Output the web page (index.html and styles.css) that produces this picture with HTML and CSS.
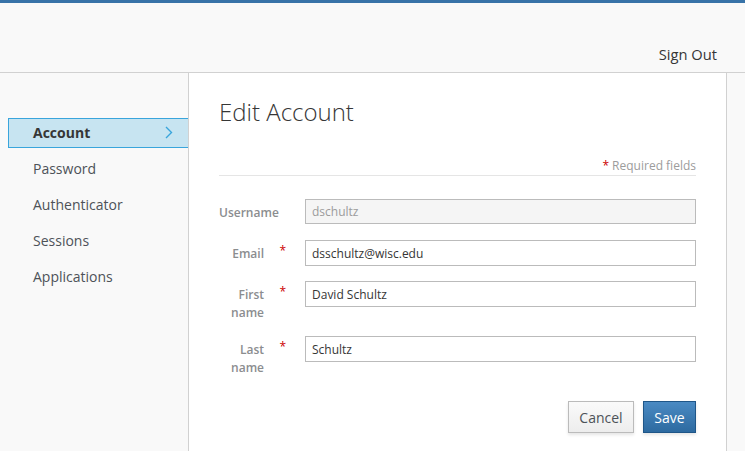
FILE: index.html
```html
<!DOCTYPE html>
<html lang="en">
<head>
<meta charset="utf-8">
<title>Edit Account</title>
<link rel="stylesheet" href="styles.css">
</head>
<body>
<header class="topbar">
  <a class="signout" href="#">Sign Out</a>
</header>
<div class="main">
  <nav class="sidebar">
    <ul class="nav">
      <li class="nav-item active"><a href="#">Account<svg class="chev" width="8" height="13" viewBox="0 0 8 13"><path d="M1 1 L6.5 6.5 L1 12" fill="none" stroke="#39a5dc" stroke-width="1.4"/></svg></a></li>
      <li class="nav-item"><a href="#">Password</a></li>
      <li class="nav-item"><a href="#">Authenticator</a></li>
      <li class="nav-item"><a href="#">Sessions</a></li>
      <li class="nav-item"><a href="#">Applications</a></li>
    </ul>
  </nav>
  <section class="content">
    <h1 class="title">Edit Account</h1>
    <div class="subtitle"><span class="req">*</span> Required fields</div>
    <form class="form">
      <div class="row row-user">
        <div class="label-cell no-req"><label class="lbl nowrap">Username</label></div>
        <input class="field disabled" type="text" value="dschultz" disabled>
      </div>
      <div class="row">
        <div class="label-cell"><label class="lbl">Email</label><span class="req-mark">*</span></div>
        <input class="field" type="text" value="dsschultz@wisc.edu">
      </div>
      <div class="row">
        <div class="label-cell"><label class="lbl">First name</label><span class="req-mark">*</span></div>
        <input class="field" type="text" value="David Schultz">
      </div>
      <div class="row">
        <div class="label-cell"><label class="lbl">Last name</label><span class="req-mark">*</span></div>
        <input class="field" type="text" value="Schultz">
      </div>
      <div class="actions">
        <button type="button" class="btn btn-default">Cancel</button>
        <button type="button" class="btn btn-primary">Save</button>
      </div>
    </form>
  </section>
  <div class="rightpad"></div>
</div>
</body>
</html>
```
FILE: styles.css
```css
* { box-sizing: border-box; }
html, body { height: 100%; }
body {
  margin: 0;
  font-family: "Open Sans", "Liberation Sans", sans-serif;
  font-size: 12px;
  color: #363636;
  background: #f9f9f9;
  display: flex;
  flex-direction: column;
  overflow: hidden;
}
.topbar {
  height: 73px;
  border-top: 3px solid #3873a8;
  border-bottom: 1px solid #d1d1d1;
  background: #f9f9f9;
  display: flex;
  justify-content: flex-end;
  align-items: flex-end;
  padding: 0 28px 8px 0;
  flex: none;
}
.signout {
  font-size: 14.7px;
  color: #363636;
  text-decoration: none;
  line-height: 20px;
}
.main {
  flex: 1;
  display: flex;
}
.sidebar {
  width: 189px;
  border-right: 1px solid #d1d1d1;
  background: #f9f9f9;
  padding-top: 42px;
  flex: none;
}
.nav { list-style: none; margin: 0; padding: 0; }
.nav-item { height: 36px; display: flex; align-items: center; }
.nav-item a {
  display: flex;
  align-items: center;
  width: 100%;
  height: 30px;
  margin-left: 8px;
  padding-left: 24px;
  padding-right: 15px;
  padding-bottom: 1px;
  font-size: 14px;
  color: #4d5258;
  text-decoration: none;
  border: 1px solid transparent;
  border-right: none;
}
.nav-item.active a {
  background: #c7e4f1;
  border-color: #39a5dc;
  font-weight: 700;
  color: #363636;
  justify-content: space-between;
}
.chev { display: block; }
.content {
  width: 538px;
  background: #fff;
  padding: 24px 30px 0 30px;
  border-right: 1px solid #d1d1d1;
  flex: none;
}
.rightpad { flex: 1; background: #f9f9f9; }
.title {
  margin: 0;
  font-size: 24px;
  font-weight: 300;
  line-height: 30px;
  color: #363636;
}
.subtitle {
  margin-top: 30px;
  line-height: 17px;
  padding-bottom: 1px;
  border-bottom: 1px solid #e5e5e5;
  text-align: right;
  color: #9c9c9c;
  font-size: 12px;
}
.req { color: #cc0000; }
.form { padding-top: 23px; }
.row {
  display: flex;
  align-items: flex-start;
  margin-bottom: 15px;
}
.row-user { margin-bottom: 16px; }
.label-cell {
  width: 86px;
  flex: none;
  display: flex;
  padding-right: 19px;
}
.label-cell.no-req { padding-right: 27px; }
.lbl {
  flex: 1;
  text-align: right;
  font-weight: 600;
  color: #8b8d8f;
  line-height: 17.5px;
  padding-top: 5px;
}
.nowrap { white-space: nowrap; }
.req-mark {
  width: 22px;
  text-align: right;
  color: #cc0000;
  line-height: 18px;
  padding-top: 2px;
  font-size: 12px;
}
.field {
  flex: 1;
  height: 26px;
  border: 1px solid #bbbbbb;
  padding: 0 6px;
  font-family: inherit;
  font-size: 12px;
  color: #363636;
  background: #fff;
  outline: none;
}
.field.disabled {
  background: #f5f5f5;
  color: #9c9c9c;
  height: 25px;
}
.actions {
  display: flex;
  justify-content: flex-end;
  gap: 9px;
  padding-top: 10px;
}
.btn {
  height: 32px;
  font-family: inherit;
  font-size: 14px;
  padding: 0 10px;
  border: 1px solid;
  box-shadow: 0 2px 3px rgba(3, 3, 3, 0.1);
  cursor: pointer;
}
.btn-default {
  width: 66px;
  color: #4d5258;
  background: linear-gradient(#fafafa, #ededed);
  border-color: #bbbbbb;
}
.btn-primary {
  width: 53px;
  color: #fff;
  background: linear-gradient(#4a8ac3, #2d6aa0);
  border-color: #1f5688;
}
```
